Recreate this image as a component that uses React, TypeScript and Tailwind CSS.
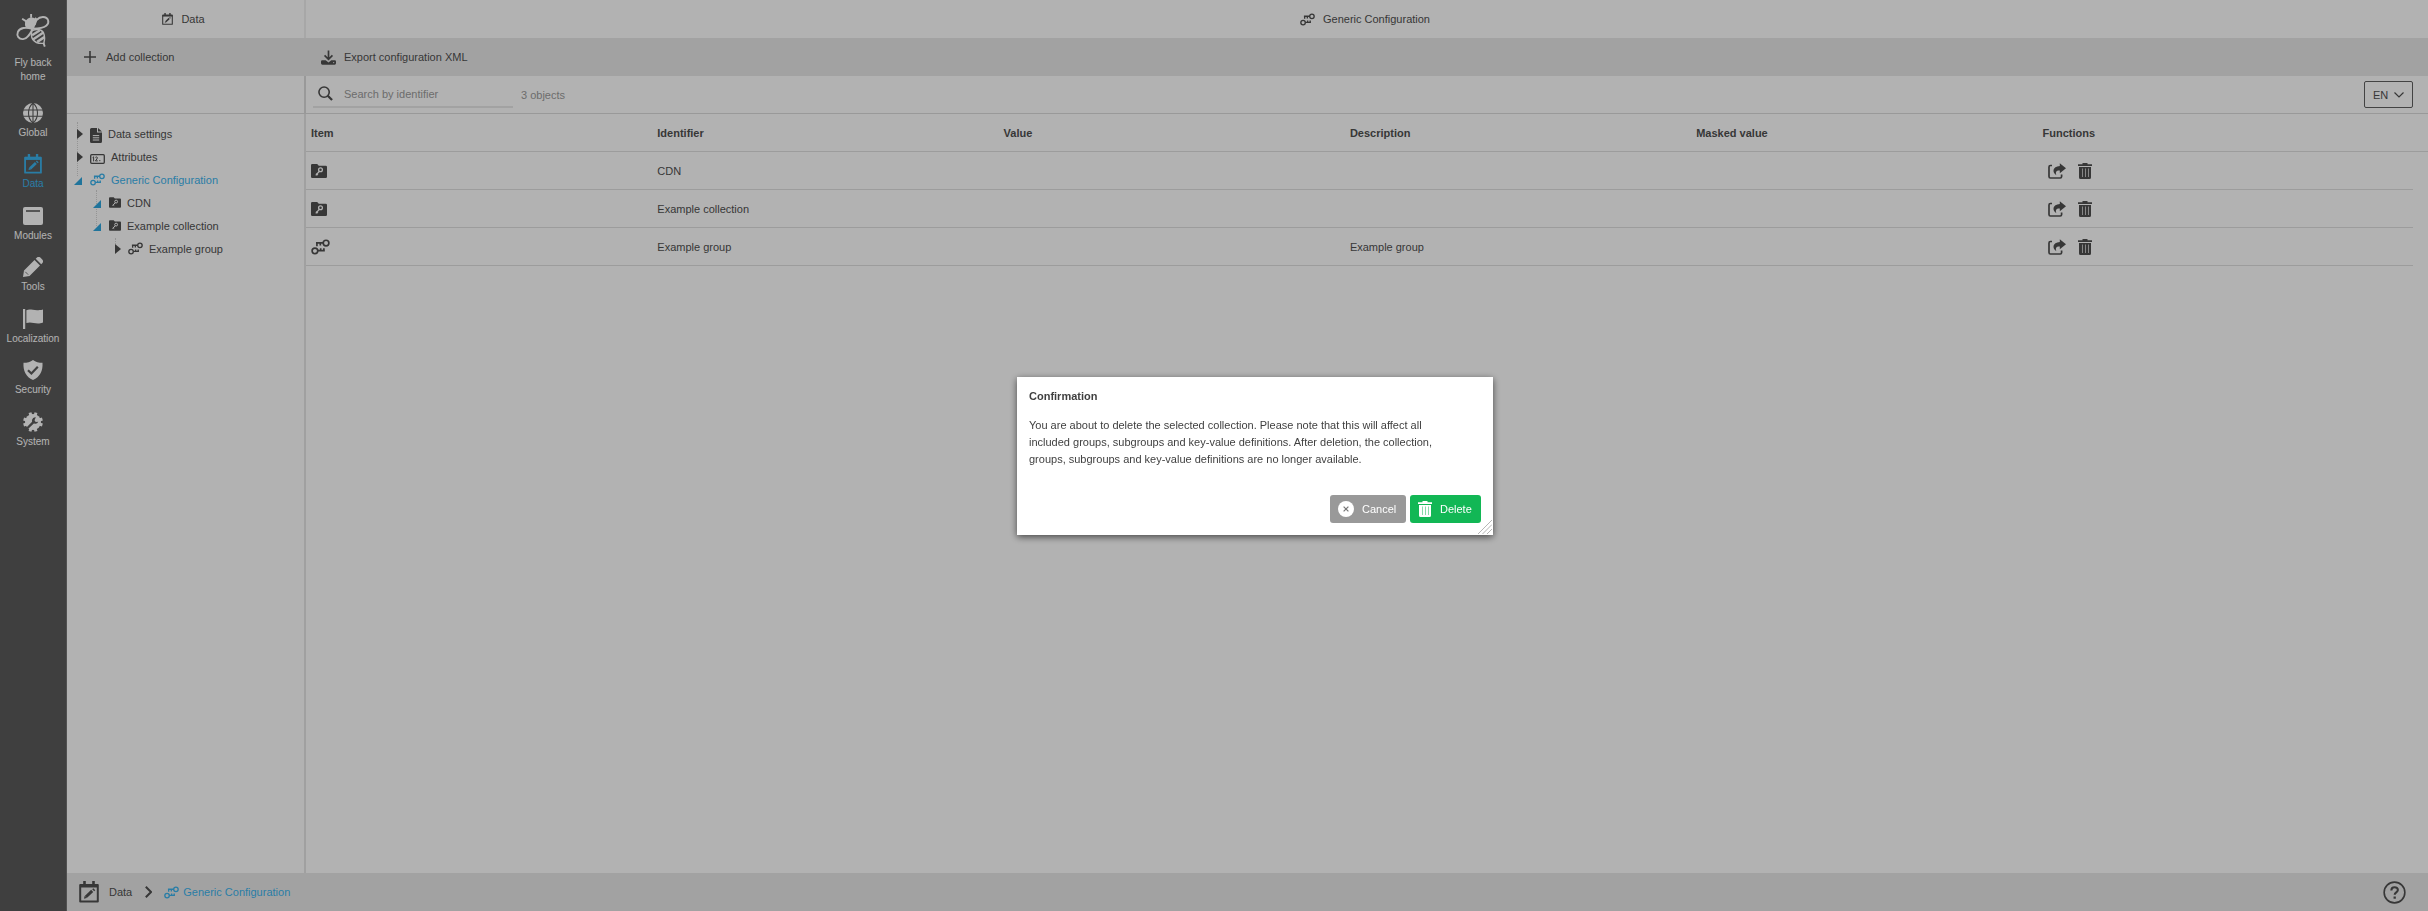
import React from 'react';

type IconProps = { className?: string };

const CalendarEdit = ({ className }: IconProps) => (
    <svg viewBox="0 0 20 22" className={className} fill="none" stroke="currentColor" aria-hidden="true">
        <path d="M1.2 4h17.6v16.6H1.2z" strokeWidth="2" strokeLinejoin="round" />
        <path d="M1 4.8h18" strokeWidth="3.4" />
        <path d="M5.5 0v4M14.5 0v4" strokeWidth="2.6" />
        <path d="M6.8 16l6.4-6.2" strokeWidth="3" />
        <path d="M5 17.8l.6-2.9 2.2 2.2zM13.2 8.2l1.1-1 2 2-1.1 1z" fill="currentColor" stroke="none" />
    </svg>
);

const Keys = ({ className }: IconProps) => (
    <svg viewBox="0 0 20 17" className={className} fill="none" stroke="currentColor" strokeWidth="1.8" aria-hidden="true">
        <circle cx="4.1" cy="12.6" r="3" />
        <path d="M7 12.4h7.6M10.2 12.4v-2.6M13.6 13.2V9.8" />
        <circle cx="15.9" cy="4.3" r="3" />
        <path d="M13 4.2H5.2M6.2 3.4v4.2M9.8 4.2v2.8" />
    </svg>
);

const FolderKey = ({ className }: IconProps) => (
    <svg viewBox="0 0 16 14" className={className} aria-hidden="true">
        <path d="M1.2 0h5l1.6 1.8h7A1.2 1.2 0 0 1 16 3v9.8a1.2 1.2 0 0 1-1.2 1.2H1.2A1.2 1.2 0 0 1 0 12.8V1.2A1.2 1.2 0 0 1 1.2 0z" fill="currentColor" />
        <circle cx="9.5" cy="5.8" r="1.9" fill="none" stroke="#fff" strokeWidth="1.3" />
        <path d="M8.2 7.3l-3.4 4M5.2 9.6l1.7 1.5" fill="none" stroke="#fff" strokeWidth="1.3" />
    </svg>
);

const FileText = ({ className }: IconProps) => (
    <svg viewBox="0 0 12 15" className={className} aria-hidden="true">
        <path d="M1.5 0H7v4.5h5v9a1.5 1.5 0 0 1-1.5 1.5h-9A1.5 1.5 0 0 1 0 13.5v-12A1.5 1.5 0 0 1 1.5 0zM8 0l4 3.6H8z" fill="currentColor" />
        <path d="M2.8 7.6h6.4M2.8 9.8h6.4M2.8 12h6.4" stroke="#fff" strokeWidth="1" />
    </svg>
);

const NumberField = ({ className }: IconProps) => (
    <svg viewBox="0 0 15 10" className={className} fill="none" stroke="currentColor" aria-hidden="true">
        <rect x=".7" y=".7" width="13.6" height="8.6" rx="1" strokeWidth="1.3" />
        <path d="M2.6 3.6l1-.8v4.6M5.4 3.4q1.8-1.2 2 .3 0 1-2 3.2h2.4M9.8 7.2V6" strokeWidth="1" />
    </svg>
);

const Plus = ({ className }: IconProps) => (
    <svg viewBox="0 0 12 12" className={className} aria-hidden="true">
        <path d="M6 0v12M0 6h12" stroke="currentColor" strokeWidth="1.6" />
    </svg>
);

const Download = ({ className }: IconProps) => (
    <svg viewBox="0 0 16 16" className={className} fill="none" stroke="currentColor" aria-hidden="true">
        <path d="M8 .5v9M3.8 5.8L8 10l4.2-4.2" strokeWidth="1.8" />
        <path d="M1.6 11H5l3 2.2L11 11h3.4a1.4 1.4 0 0 1 1.600 1.400v1.800a1.400 1.400 0 0 1-1.400 1.400H1.400A1.400 1.400 0 0 1 0 14.200v-1.800A1.400 1.400 0 0 1 1.600 11z" fill="currentColor" stroke="none" />
        <circle cx="13.5" cy="13.4" r=".7" fill="#e9e9e9" stroke="none" />
    </svg>
);

const Search = ({ className }: IconProps) => (
    <svg viewBox="0 0 16 16" className={className} fill="none" stroke="currentColor" aria-hidden="true">
        <circle cx="6.5" cy="6.5" r="5.5" strokeWidth="1.7" />
        <path d="M10.4 10.4L15 15" strokeWidth="2.4" />
    </svg>
);

const Share = ({ className }: IconProps) => (
    <svg viewBox="0 0 18 16" className={className} aria-hidden="true">
        <path d="M4 2.5H2.400Q1 2.500 1 4v9.500Q1 15 2.400 15h9.800q1.400 0 1.400-1.500V11.500" fill="none" stroke="currentColor" strokeWidth="1.7" />
        <path d="M11.800.3L18 5.200l-6.200 5V7.400C8.200 7.200 7.200 9 8.400 12.200 4 9.600 4.200 3.400 11.800 3z" fill="currentColor" />
    </svg>
);

const Trash = ({ className }: IconProps) => (
    <svg viewBox="0 0 14 16" className={className} aria-hidden="true">
        <path d="M4.5 0h5v1.2H14v1.9H0V1.2h4.5zM1 4h12v10.5a1.5 1.5 0 0 1-1.5 1.5h-9A1.5 1.5 0 0 1 1 14.5z" fill="currentColor" />
        <path d="M4.5 5.500v8.500M7.500 5.500v8.500M10.500 5.500v8.500" stroke="#fff" strokeOpacity=".65" strokeWidth="1" />
    </svg>
);

const Bee = ({ className }: IconProps) => (
    <svg viewBox="0 0 36 36" className={className} fill="none" stroke="currentColor" strokeWidth="2" aria-hidden="true">
        <path d="M16 0v4M6.500 5l4 2.500M21.500 4l-2.500 3" strokeWidth="2" />
        <path d="M9.500 7.500c1.500-.5 2-3 6.500-3.800 3.500-.2 4.500 1.800 6.500 2.300L21 11.500l-4 4.500-5.500-1.500C8.500 13.500 10 10 9.500 7.500z" fill="currentColor" stroke="none" />
        <path d="M18 15.500C19.500 8.500 23 3.200 28.500 3.200c6 0 7.500 6 3.500 9.300-3.200 2.600-8.500 3-14 3z" />
        <path d="M17.500 16C10.500 13.500 4 14.500 2 19c-1.600 4 1 8 5.500 7.600C12.500 26 15 21 17.500 16z" />
        <path d="M17 17.500c4.500-1.500 9.500-1.500 12 2 1.500 3.500 1.800 6.500.5 11.500-4.500.5-9.500-1-11.700-4-2-3-2-6-.8-9.500z" strokeWidth="1.5" />
        <path d="M17 22.500l8-5M18 27l11-7.500M22.500 29.500l7.500-5" strokeWidth="2.6" />
        <path d="M29 30.500l1.500 4" />
    </svg>
);

const Globe = ({ className }: IconProps) => (
    <svg viewBox="0 0 20 20" className={className} aria-hidden="true">
        <circle cx="10" cy="10" r="10" fill="currentColor" />
        <path d="M0 7h20M0 13.2h20M10 0v20M10 0C4 5 4 15 10 20M10 0c6 5 6 15 0 20" fill="none" stroke="#5b5b5b" strokeWidth="1.1" />
    </svg>
);

const Modules = ({ className }: IconProps) => (
    <svg viewBox="0 0 20 18" className={className} aria-hidden="true">
        <rect width="20" height="18" rx="2" fill="currentColor" />
        <path d="M3 4h14" stroke="#5b5b5b" strokeWidth="1.6" />
    </svg>
);

const Pencil = ({ className }: IconProps) => (
    <svg viewBox="0 0 20 20" className={className} aria-hidden="true">
        <path d="M0 20l1-6.500L11.500 3l5.500 5.500L6.500 19zM12.700 1.800l.8-.8a3 3 0 0 1 4.300 0l1.200 1.200a3 3 0 0 1 0 4.300l-.8.8z" fill="currentColor" />
        <path d="M2.3 14.8l2.9 2.9" stroke="#5b5b5b" strokeWidth=".8" />
    </svg>
);

const Flag = ({ className }: IconProps) => (
    <svg viewBox="0 0 20 20" className={className} fill="currentColor" aria-hidden="true">
        <path d="M0 0h2.200v20H0zM3.400 1.200C8-.8 11 2.800 20 .5v13c-7 2.800-11-1.500-16.600.6z" />
    </svg>
);

const Shield = ({ className }: IconProps) => (
    <svg viewBox="0 0 20 20" className={className} aria-hidden="true">
        <path d="M10 0c2.500 2 6 2.800 9.500 2.800C20 11 17 17 10 20 3 17 0 11 .5 2.800 4 2.800 7.500 2 10 0z" fill="currentColor" />
        <path d="M5 10.200l3.400 3.300 6.400-6.700" fill="none" stroke="#5b5b5b" strokeWidth="2.2" />
    </svg>
);

const Gear = ({ className }: IconProps) => (
    <svg viewBox="0 0 20 20" className={className} aria-hidden="true">
        <circle cx="10" cy="10" r="8" fill="currentColor" />
        <path d="M7 .6l6 18.800M13 .6L7 19.400M.6 7l18.800 6M.6 13L19.400 7" stroke="currentColor" strokeWidth="3" />
        <path d="M5 15.500l5.200-5.200" stroke="#5b5b5b" strokeWidth="2.4" strokeLinecap="round" />
        <path d="M12.800 5.200a3.300 3.300 0 1 0 2.500 4.600l-2.600.1-1.200-1.600z" fill="#5b5b5b" />
    </svg>
);

const Chevron = ({ className }: IconProps) => (
    <svg viewBox="0 0 10 6" className={className} fill="none" stroke="currentColor" aria-hidden="true">
        <path d="M.5.5L5 5 9.500.5" strokeWidth="1.2" />
    </svg>
);

const navItems = [
    { label: 'Global', icon: <Globe className="h-5 w-5" /> },
    { label: 'Data', icon: <CalendarEdit className="h-5 w-[18px]" />, active: true },
    { label: 'Modules', icon: <Modules className="h-[18px] w-5" /> },
    { label: 'Tools', icon: <Pencil className="h-5 w-5" /> },
    { label: 'Localization', icon: <Flag className="h-5 w-5" /> },
    { label: 'Security', icon: <Shield className="h-5 w-5" /> },
    { label: 'System', icon: <Gear className="h-5 w-5" /> },
];

const tree = [
    { label: 'Data settings', indent: 'pl-[7px]', icon: <FileText className="mt-1 h-[15px] w-3" /> },
    { label: 'Attributes', indent: 'pl-[7px]', icon: <NumberField className="mt-1 h-[10px] w-[15px]" /> },
    { label: 'Generic Configuration', indent: 'pl-[7px]', open: true, active: true, icon: <Keys className="h-[13px] w-[15px]" /> },
    { label: 'CDN', indent: 'pl-[26px]', open: true, icon: <FolderKey className="h-[11px] w-3" /> },
    { label: 'Example collection', indent: 'pl-[26px]', open: true, icon: <FolderKey className="h-[11px] w-3" /> },
    { label: 'Example group', indent: 'pl-[45px]', icon: <Keys className="h-[13px] w-[15px]" /> },
];

const columns = ['Item', 'Identifier', 'Value', 'Description', 'Masked value', 'Functions'];

const rows = [
    { identifier: 'CDN', description: '', group: false },
    { identifier: 'Example collection', description: '', group: false },
    { identifier: 'Example group', description: 'Example group', group: true },
];

function Sidebar() {
    return (
        <nav className="w-[67px] shrink-0 border-r border-[#757575] bg-[#5b5b5b] text-white">
            <a href="#home" className="flex h-[98px] flex-col items-center pt-[14px] text-center text-[10px] leading-[14px]">
                <Bee className="mb-2 h-[34px] w-9" />
                <span className="w-10">Fly back home</span>
            </a>
            <ul className="grid h-[360px] grid-rows-7">
                {navItems.map(item => (
                    <li key={item.label}>
                        <a
                            href={`#${item.label.toLowerCase()}`}
                            className={`flex flex-col items-center text-[10px] leading-3 ${item.active ? 'text-[#3cb4ee]' : ''}`}
                        >
                            <span className="mt-[5px] mb-1 flex h-5 items-center">{item.icon}</span>
                            {item.label}
                        </a>
                    </li>
                ))}
            </ul>
        </nav>
    );
}

function Tree() {
    return (
        <div className="relative pt-2">
            <span className="absolute top-2 left-[10px] h-[54px] border-l border-dotted border-[#d4d4d4]" />
            <span className="absolute top-[76px] left-[29px] h-9 border-l border-dotted border-[#d4d4d4]" />
            <span className="absolute top-[124px] left-12 h-3 border-l border-dotted border-[#d4d4d4]" />
            <ul className="relative">
                {tree.map(node => (
                    <li key={node.label} className={`flex h-[23px] items-center gap-[6px] ${node.indent} ${node.active ? 'text-[#3cb4ee]' : ''}`}>
                        <button type="button" aria-label={`Toggle ${node.label}`} className="flex w-[10px] shrink-0">
                            {node.open ? (
                                <svg viewBox="0 0 8 8" className="mt-[2px] h-2 w-2 text-[#2ea6de]">
                                    <path d="M8 0v8H0z" fill="currentColor" />
                                </svg>
                            ) : (
                                <svg viewBox="0 0 6 10" className="ml-[3px] h-[10px] w-[6px]">
                                    <path d="M0 0l6 5-6 5z" fill="currentColor" />
                                </svg>
                            )}
                        </button>
                        {node.icon}
                        <a href="#node">{node.label}</a>
                    </li>
                ))}
            </ul>
        </div>
    );
}

function ObjectTable() {
    return (
        <table className="w-full table-fixed border-separate border-spacing-0 text-left">
            <colgroup>
                <col className="w-[16.32%]" />
                <col className="w-[16.32%]" />
                <col className="w-[16.32%]" />
                <col className="w-[16.32%]" />
                <col className="w-[16.32%]" />
                <col />
                <col className="w-[15px]" />
            </colgroup>
            <thead>
                <tr>
                    {columns.map(column => (
                        <th key={column} className="h-[38px] border-b border-[#e0e0e0] px-[5px] font-bold">{column}</th>
                    ))}
                    <td className="border-b border-[#e0e0e0]" />
                </tr>
            </thead>
            <tbody>
                {rows.map(row => (
                    <tr key={row.identifier}>
                        <td className="h-[38px] border-b border-[#e0e0e0] px-[5px]">
                            {row.group ? <Keys className="h-4 w-[19px]" /> : <FolderKey className="h-[14px] w-4" />}
                        </td>
                        <td className="border-b border-[#e0e0e0] px-[5px]">{row.identifier}</td>
                        <td className="border-b border-[#e0e0e0]" />
                        <td className="border-b border-[#e0e0e0] px-[5px]">{row.description}</td>
                        <td className="border-b border-[#e0e0e0]" />
                        <td className="border-b border-[#e0e0e0] px-[11px]">
                            <div className="flex items-center gap-3">
                                <button type="button" aria-label="Open"><Share className="h-4 w-[18px]" /></button>
                                <button type="button" aria-label="Delete"><Trash className="h-4 w-[14px]" /></button>
                            </div>
                        </td>
                        <td />
                    </tr>
                ))}
            </tbody>
        </table>
    );
}

function ConfirmDialog() {
    return (
        <div className="fixed inset-0 flex items-center justify-center bg-black/30 pl-[82px]">
            <div
                role="dialog"
                aria-labelledby="confirm-title"
                className="relative w-[476px] bg-white px-3 pt-[11px] pb-3 text-[#3f3f3f] shadow-[0_2px_7px_rgba(0,0,0,0.6)]"
            >
                <h2 id="confirm-title" className="leading-[17px] font-bold">Confirmation</h2>
                <p className="mt-3 max-w-[430px] leading-[17px]">
                    You are about to delete the selected collection. Please note that this will affect all included groups,
                    subgroups and key-value definitions. After deletion, the collection, groups, subgroups and key-value
                    definitions are no longer available.
                </p>
                <div className="mt-[27px] flex justify-end gap-1 text-white">
                    <button type="button" className="flex h-7 w-[76px] items-center gap-2 rounded-[3px] bg-[#999] pl-2">
                        <svg viewBox="0 0 16 16" className="h-4 w-4" aria-hidden="true">
                            <circle cx="8" cy="8" r="8" fill="#fff" />
                            <path d="M5.6 5.6l4.8 4.8M10.4 5.6l-4.800 4.800" stroke="#777" strokeWidth="1.2" />
                        </svg>
                        Cancel
                    </button>
                    <button type="button" className="flex h-7 w-[71px] items-center gap-2 rounded-[3px] bg-[#12b755] pl-2">
                        <svg viewBox="0 0 14 16" className="h-4 w-[14px]" aria-hidden="true">
                            <path d="M4.5 0h5v1.2H14v1.9H0V1.2h4.5zM1 4h12v10.5a1.5 1.5 0 0 1-1.5 1.5h-9A1.5 1.5 0 0 1 1 14.5z" fill="#fff" />
                            <path d="M4.5 5.500v8.500M7.500 5.500v8.500M10.500 5.500v8.500" stroke="#12b755" strokeOpacity=".5" strokeWidth="1" />
                        </svg>
                        Delete
                    </button>
                </div>
                <svg viewBox="0 0 14 14" className="absolute right-px bottom-px h-[14px] w-[14px]" aria-hidden="true">
                    <path d="M0 14L14 0M4.5 14L14 4.5M9 14l5-5" stroke="#b5b5b5" strokeWidth="1" />
                </svg>
            </div>
        </div>
    );
}

export default function App() {
    return (
        <div className="flex min-h-screen bg-white font-['Liberation_Sans',Arial,sans-serif] text-[11px] leading-4 text-[#505050]">
            <Sidebar />
            <div className="flex min-w-0 flex-1 flex-col">
                <div className="flex flex-1">
                    <aside className="flex w-[239px] shrink-0 flex-col">
                        <header className="flex h-[38px] items-center justify-center gap-2 border-r-2 border-[#efefef] pr-1">
                            <CalendarEdit className="h-3 w-[11px]" />
                            Data
                        </header>
                        <div className="flex h-[38px] items-center bg-[#e9e9e9] pl-[17px]">
                            <button type="button" className="flex items-center gap-[10px]">
                                <Plus className="h-3 w-3" />
                                Add collection
                            </button>
                        </div>
                        <div className="h-[38px] border-r-2 border-b border-[#dcdcdc]" />
                        <div className="flex-1 border-r-2 border-[#e6e6e6]">
                            <Tree />
                        </div>
                    </aside>
                    <main className="min-w-0 flex-1">
                        <header className="flex h-[38px] items-center justify-center gap-2 pr-1">
                            <Keys className="h-[13px] w-[15px]" />
                            <h1>Generic Configuration</h1>
                        </header>
                        <div className="flex h-[38px] items-center bg-[#e9e9e9] pl-[15px]">
                            <button type="button" className="flex items-center gap-2">
                                <Download className="h-[15px] w-[15px]" />
                                Export configuration XML
                            </button>
                        </div>
                        <div className="flex h-[38px] items-center border-b border-[#dcdcdc] pr-[15px] pl-[7px] text-[#9c9c9c]">
                            <label className="flex h-[27px] w-[200px] items-center gap-[11px] border-b-2 border-[#e9e9e9] pl-[5px]">
                                <Search className="h-[15px] w-[15px] shrink-0 text-[#505050]" />
                                <input
                                    type="text"
                                    aria-label="Search by identifier"
                                    placeholder="Search by identifier"
                                    className="w-full outline-none placeholder:text-[#9c9c9c]"
                                />
                            </label>
                            <span className="ml-2">3 objects</span>
                            <div className="relative ml-auto text-[#505050]">
                                <select aria-label="Language" className="h-[27px] w-[49px] appearance-none rounded-[2px] border border-[#606060] pl-2">
                                    <option>EN</option>
                                </select>
                                <Chevron className="pointer-events-none absolute top-[11px] right-[9px] h-[6px] w-[10px]" />
                            </div>
                        </div>
                        <ObjectTable />
                    </main>
                </div>
                <footer className="flex h-[38px] items-center bg-[#e9e9e9] pr-[22px] pl-3">
                    <CalendarEdit className="h-[22px] w-5" />
                    <a href="#data" className="ml-[10px]">Data</a>
                    <svg viewBox="0 0 7 12" className="mr-3 ml-[13px] h-3 w-[7px]" fill="none" aria-hidden="true">
                        <path d="M.8.8L6 6 .8 11.200" stroke="currentColor" strokeWidth="2" />
                    </svg>
                    <a href="#generic" className="flex items-center gap-1 text-[#3cb4ee]">
                        <Keys className="h-[13px] w-[15px]" />
                        Generic Configuration
                    </a>
                    <button type="button" aria-label="Help" className="ml-auto">
                        <svg viewBox="0 0 24 24" className="h-[23px] w-[23px]" fill="none" stroke="currentColor" aria-hidden="true">
                            <circle cx="12" cy="12" r="10.800" strokeWidth="1.7" />
                            <path d="M8.7 9.8c0-4.300 6.800-4.300 6.800-.4 0 2.400-3.300 2.500-3.300 5" strokeWidth="2.2" />
                            <path d="M12.200 16.200v2.300" strokeWidth="2.4" />
                        </svg>
                    </button>
                </footer>
            </div>
            <ConfirmDialog />
        </div>
    );
}
